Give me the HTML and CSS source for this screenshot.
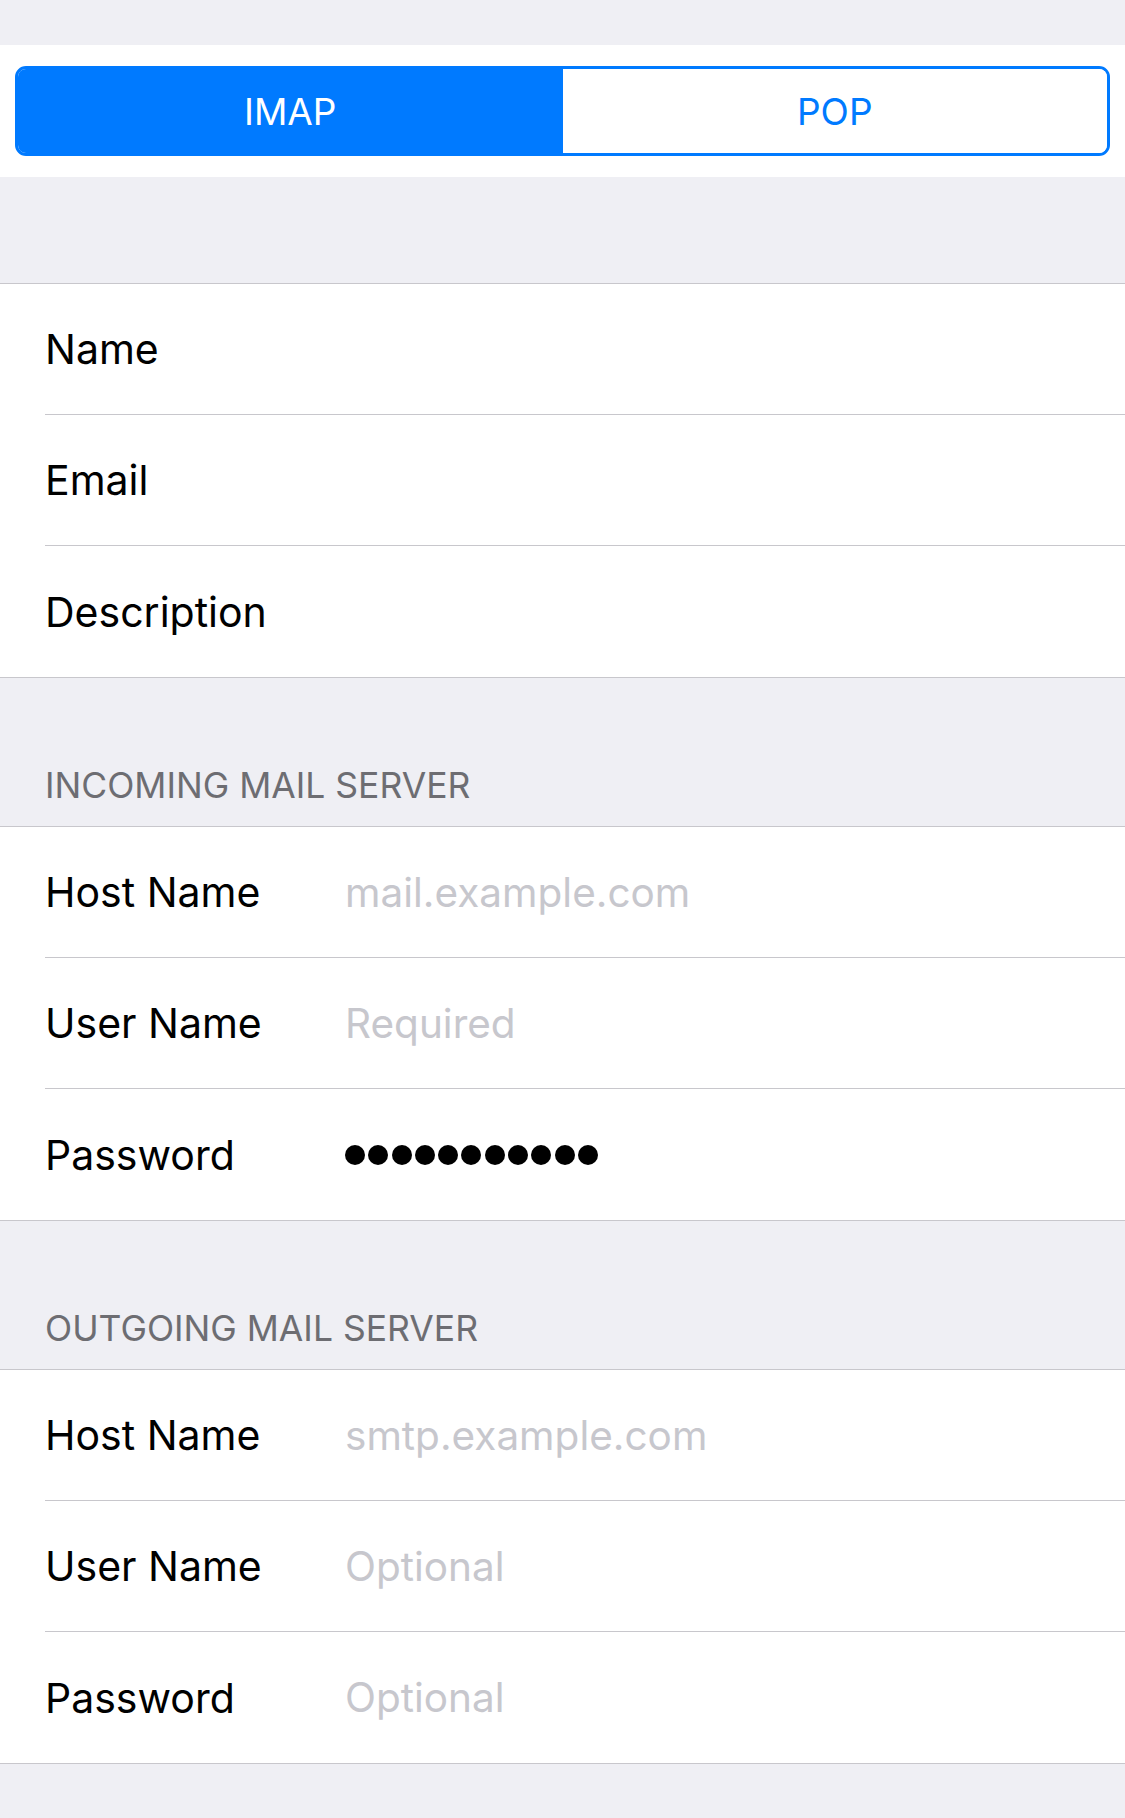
FILE: index.html
```html
<!DOCTYPE html>
<html lang="en">
<head>
    <meta charset="UTF-8">
    <meta name="viewport" content="width=device-width, initial-scale=1.0">
    <title>Account Settings</title>
    <link rel="stylesheet" href="styles.css">
</head>
<body>
    <div class="segment-bar">
        <div class="segmented">
            <div class="segment active">IMAP</div>
            <div class="segment">POP</div>
        </div>
    </div>

    <div class="spacer"></div>

    <div class="group">
        <div class="cell"><div class="cell-inner"><span class="label">Name</span></div></div>
        <div class="cell"><div class="cell-inner"><span class="label">Email</span></div></div>
        <div class="cell"><div class="cell-inner"><span class="label">Description</span></div></div>
    </div>

    <div class="group-header">INCOMING MAIL SERVER</div>
    <div class="group">
        <div class="cell"><div class="cell-inner"><span class="label">Host Name</span><span class="placeholder">mail.example.com</span></div></div>
        <div class="cell"><div class="cell-inner"><span class="label">User Name</span><span class="placeholder">Required</span></div></div>
        <div class="cell">
            <div class="cell-inner">
                <span class="label">Password</span>
                <span class="dots" aria-label="password">
                    <i></i><i></i><i></i><i></i><i></i><i></i><i></i><i></i><i></i><i></i><i></i>
                </span>
            </div>
        </div>
    </div>

    <div class="group-header">OUTGOING MAIL SERVER</div>
    <div class="group">
        <div class="cell"><div class="cell-inner"><span class="label">Host Name</span><span class="placeholder">smtp.example.com</span></div></div>
        <div class="cell"><div class="cell-inner"><span class="label">User Name</span><span class="placeholder">Optional</span></div></div>
        <div class="cell"><div class="cell-inner"><span class="label">Password</span><span class="placeholder">Optional</span></div></div>
    </div>
</body>
</html>
```

FILE: styles.css
```css
body {
    margin: 0;
    padding: 45px 0 54px;
    background: #efeff4;
    font-family: Inter, "Noto Sans", sans-serif;
    color: #000;
}

.segment-bar {
    background: #fff;
    padding: 21px 15px;
}

.segmented {
    display: flex;
    height: 90px;
    box-sizing: border-box;
    border: 3px solid #007aff;
    border-radius: 11px;
    overflow: hidden;
}

.segment {
    flex: 1;
    display: flex;
    align-items: center;
    justify-content: center;
    font-size: 37px;
    color: #007aff;
    background: #fff;
}

.segment.active {
    background: #007aff;
    color: #fff;
}

.spacer {
    height: 106px;
}

.group {
    background: #fff;
    border-top: 1px solid #c8c7cc;
    border-bottom: 1px solid #c8c7cc;
}

.cell {
    padding-left: 45px;
}

.cell-inner {
    height: 131px;
    box-sizing: border-box;
    border-bottom: 1px solid #c8c7cc;
    display: flex;
    align-items: center;
    font-size: 41px;
}

.cell:last-child .cell-inner {
    border-bottom: none;
}

.label {
    width: 300px;
    flex-shrink: 0;
}

.placeholder {
    color: #c7c7cd;
    font-size: 40.5px;
}

.dots {
    display: flex;
    gap: 3.3px;
}

.dots i {
    width: 20px;
    height: 20px;
    border-radius: 50%;
    background: #000;
}

.group-header {
    height: 148px;
    box-sizing: border-box;
    padding: 0 0 23px 45px;
    display: flex;
    align-items: flex-end;
    font-size: 35.5px;
    line-height: 1;
    color: #6d6d72;
}
```
